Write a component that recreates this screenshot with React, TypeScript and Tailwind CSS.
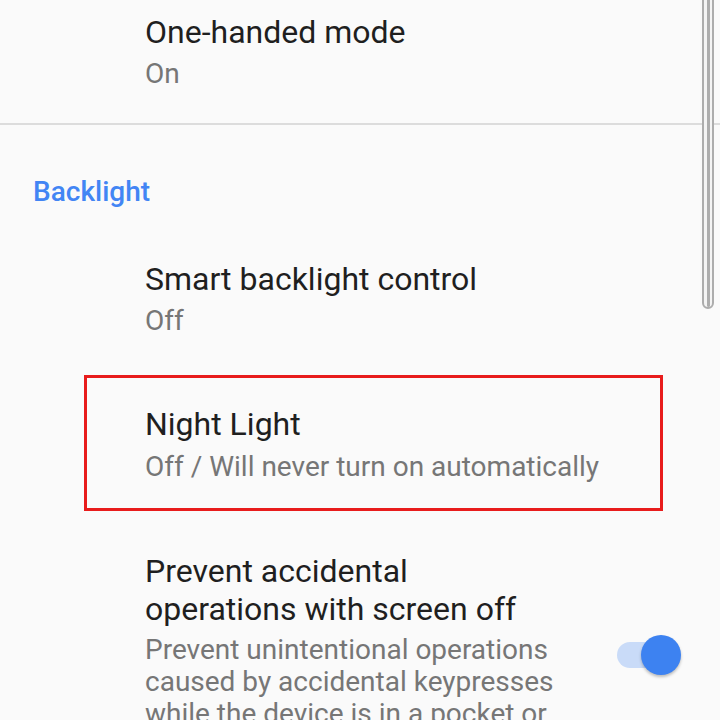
import React from "react";

const font = { fontFamily: "Roboto, 'Noto Sans', sans-serif" };

export default function App() {
  return (
    <div
      className="relative h-[720px] w-[720px] overflow-hidden bg-[#fafafa]"
      style={font}
    >
      {/* One-handed mode */}
      <div className="pl-[145px] pt-[13px]">
        <div className="text-[32px] leading-[38px] text-[#1f1f1f]">One-handed mode</div>
        <div className="mt-[6px] text-[28px] leading-[34px] text-[#767676]">On</div>
      </div>

      {/* Divider */}
      <div className="mt-[32px] h-[2px] bg-[#dcdcdc]" />

      {/* Section header */}
      <div className="mt-[52px] pl-[33px] text-[28px] font-medium leading-[30px] text-[#4285f4]">
        Backlight
      </div>

      {/* Smart backlight control */}
      <div className="mt-[53px] pl-[145px]">
        <div className="text-[32px] leading-[38px] text-[#1f1f1f]">Smart backlight control</div>
        <div className="mt-[6px] text-[28px] leading-[34px] text-[#767676]">Off</div>
      </div>

      {/* Night Light (highlighted) */}
      <div className="ml-[84px] mt-[37px] box-border h-[136px] w-[579px] border-[3px] border-[#e81c1c] pl-[58px] pt-[27px]">
        <div className="text-[32px] leading-[38px] text-[#1f1f1f]">Night Light</div>
        <div className="mt-[7px] text-[28px] leading-[34px] text-[#767676]">
          Off / Will never turn on automatically
        </div>
      </div>

      {/* Prevent accidental operations */}
      <div className="mt-[41px] flex items-start pl-[145px]">
        <div className="w-[420px]">
          <div className="text-[32px] leading-[38px] text-[#1f1f1f]">
            Prevent accidental operations with screen off
          </div>
          <div className="mt-[6px] text-[28px] leading-[32px] text-[#767676]">
            Prevent unintentional operations caused by accidental keypresses while the device is in a pocket or bag.
          </div>
        </div>
        <div className="relative ml-[52px] mt-[83px] h-[40px] w-[64px] shrink-0">
          <div className="absolute left-0 top-[7px] h-[26px] w-[52px] rounded-full bg-[#c9dbf8]" />
          <div className="absolute right-0 top-0 h-[40px] w-[40px] rounded-full bg-[#3d82f1] shadow-[0_2px_3px_rgba(0,0,0,0.25)]" />
        </div>
      </div>

      {/* Scrollbar */}
      <div className="absolute right-[6px] top-[-20px] flex h-[329px] w-[12px] justify-center rounded-b-full border-[2px] border-[#adadad] bg-[#f4f4f4]">
        <div className="mb-[5px] h-full w-[3px] rounded-b-full bg-[#adadad]" />
      </div>
    </div>
  );
}
